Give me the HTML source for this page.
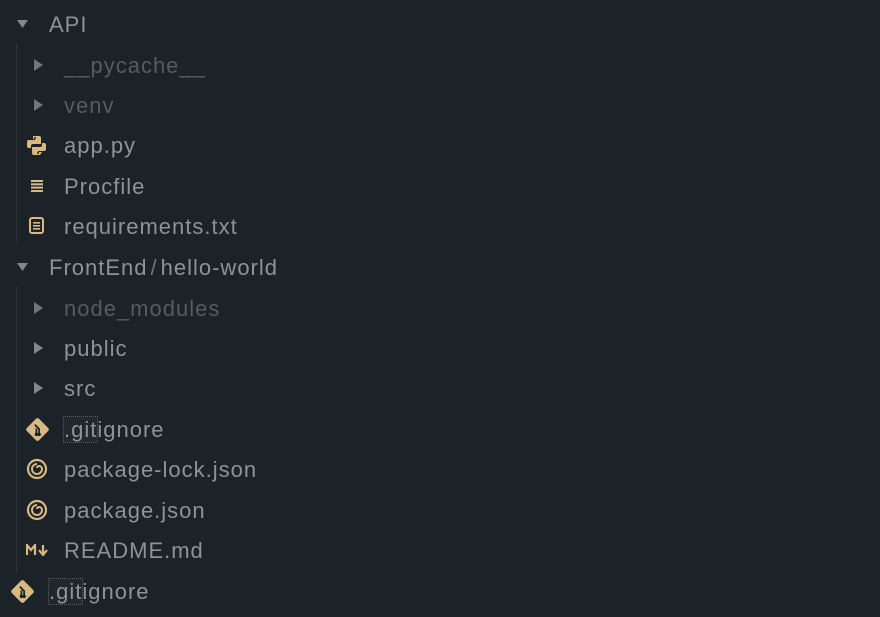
<!DOCTYPE html>
<html><head><style>
html,body{margin:0;padding:0;background:#1b2228;width:880px;height:617px;overflow:hidden}
body{font-family:"Liberation Sans",sans-serif;font-size:22px;letter-spacing:1px;color:#8a949a;position:relative}
.r{position:absolute;left:0;height:40px;line-height:42px;white-space:nowrap}
.t{position:absolute}
.dim{color:#525d63}
.ic{position:absolute}
.guide{position:absolute;left:16px;width:0;border-left:1px dotted #3a454b}
.gi{outline:1px dotted #56616a;outline-offset:0;background:#20282e}
</style></head><body>
<div class="guide" style="top:44px;height:200px"></div>
<div class="guide" style="top:287px;height:286px"></div>

<div class="r" style="top:4px"><svg class="ic" style="left:17px;top:16px" width="11" height="9"><polygon points="0,0 11,0 5.5,8" fill="#7e888e"/></svg><span class="t" style="left:49px">API</span></div>
<div class="r" style="top:45px"><svg class="ic" style="left:34px;top:14px" width="9" height="12"><polygon points="0,0 9,6 0,12" fill="#6d777d"/></svg><span class="t dim" style="left:64px">__pycache__</span></div>
<div class="r" style="top:85px"><svg class="ic" style="left:34px;top:14px" width="9" height="12"><polygon points="0,0 9,6 0,12" fill="#6d777d"/></svg><span class="t dim" style="left:64px">venv</span></div>
<div class="r" style="top:125px"><svg class="ic" style="left:26px;top:10px" width="21" height="21" viewBox="0 0 21 21"><path d="M7 1h6a2 2 0 0 1 2 2v6H7a2 2 0 0 0-2 2v2H3a2 2 0 0 1-2-2V7a2 2 0 0 1 2-2h6V4H7z" fill="#d7b981"/><path d="M14 20H8a2 2 0 0 1-2-2v-6h8a2 2 0 0 0 2-2V8h2a2 2 0 0 1 2 2v4a2 2 0 0 1-2 2h-6v1h4z" fill="#d7b981"/><circle cx="9" cy="3" r="1" fill="#1b2228"/><circle cx="12" cy="18" r="1" fill="#1b2228"/></svg><span class="t" style="left:64px">app.py</span></div>
<div class="r" style="top:166px"><svg class="ic" style="left:31px;top:14px" width="12" height="12"><g fill="#d7b981"><rect y="0" width="12" height="2"/><rect y="3.3" width="12" height="2"/><rect y="6.6" width="12" height="2"/><rect y="10" width="12" height="2"/></g></svg><span class="t" style="left:64px">Procfile</span></div>
<div class="r" style="top:206px"><svg class="ic" style="left:29px;top:11px" width="15" height="17"><rect x="1" y="1" width="13" height="15" rx="2" fill="none" stroke="#d7b981" stroke-width="2"/><g fill="#d7b981"><rect x="4" y="5" width="7" height="1.6"/><rect x="4" y="8" width="7" height="1.6"/><rect x="4" y="11" width="7" height="1.6"/></g></svg><span class="t" style="left:64px">requirements.txt</span></div>

<div class="r" style="top:247px"><svg class="ic" style="left:17px;top:16px" width="11" height="9"><polygon points="0,0 11,0 5.5,8" fill="#7e888e"/></svg><span class="t" style="left:49px">FrontEnd<span style="color:#6d777d;padding:0 3px">/</span>hello-world</span></div>
<div class="r" style="top:288px"><svg class="ic" style="left:34px;top:14px" width="9" height="12"><polygon points="0,0 9,6 0,12" fill="#6d777d"/></svg><span class="t dim" style="left:64px">node_modules</span></div>
<div class="r" style="top:328px"><svg class="ic" style="left:34px;top:14px" width="9" height="12"><polygon points="0,0 9,6 0,12" fill="#7e888e"/></svg><span class="t" style="left:64px">public</span></div>
<div class="r" style="top:368px"><svg class="ic" style="left:34px;top:14px" width="9" height="12"><polygon points="0,0 9,6 0,12" fill="#7e888e"/></svg><span class="t" style="left:64px">src</span></div>
<div class="r" style="top:409px"><svg class="ic" style="left:24px;top:7px" width="27" height="27" viewBox="0 0 25 25"><rect x="4.5" y="4.5" width="16" height="16" rx="2" transform="rotate(45 12.5 12.5)" fill="#d7b981"/><path d="M10 8l4 4v5M11.5 11.5v5" stroke="#1b2228" stroke-width="1.6" fill="none"/><circle cx="14" cy="17" r="1.6" fill="#1b2228"/><circle cx="11.5" cy="17" r="1.6" fill="#1b2228"/></svg><span class="t" style="left:64px"><span class="gi">.git</span>ignore</span></div>
<div class="r" style="top:449px"><svg class="ic" style="left:26px;top:9px" width="22" height="22" viewBox="0 0 22 22"><circle cx="11" cy="11" r="9" fill="none" stroke="#d7b981" stroke-width="2.2"/><path d="M11 6a5 5 0 1 0 5 5a3 3 0 0 0-3-3a2 2 0 0 0-2 2" fill="none" stroke="#d7b981" stroke-width="2"/></svg><span class="t" style="left:64px">package-lock.json</span></div>
<div class="r" style="top:490px"><svg class="ic" style="left:26px;top:9px" width="22" height="22" viewBox="0 0 22 22"><circle cx="11" cy="11" r="9" fill="none" stroke="#d7b981" stroke-width="2.2"/><path d="M11 6a5 5 0 1 0 5 5a3 3 0 0 0-3-3a2 2 0 0 0-2 2" fill="none" stroke="#d7b981" stroke-width="2"/></svg><span class="t" style="left:64px">package.json</span></div>
<div class="r" style="top:530px"><svg class="ic" style="left:26px;top:14px" width="24" height="12" viewBox="0 0 24 12"><path d="M1 11V1l4 5 4-5v10" fill="none" stroke="#d7b981" stroke-width="2.2"/><path d="M17 1v8M13 6l4 5 4-5" fill="none" stroke="#d7b981" stroke-width="2.2"/></svg><span class="t" style="left:64px">README.md</span></div>
<div class="r" style="top:571px"><svg class="ic" style="left:9px;top:7px" width="27" height="27" viewBox="0 0 25 25"><rect x="4.5" y="4.5" width="16" height="16" rx="2" transform="rotate(45 12.5 12.5)" fill="#d7b981"/><path d="M10 8l4 4v5M11.5 11.5v5" stroke="#1b2228" stroke-width="1.6" fill="none"/><circle cx="14" cy="17" r="1.6" fill="#1b2228"/><circle cx="11.5" cy="17" r="1.6" fill="#1b2228"/></svg><span class="t" style="left:49px"><span class="gi">.git</span>ignore</span></div>
</body></html>
